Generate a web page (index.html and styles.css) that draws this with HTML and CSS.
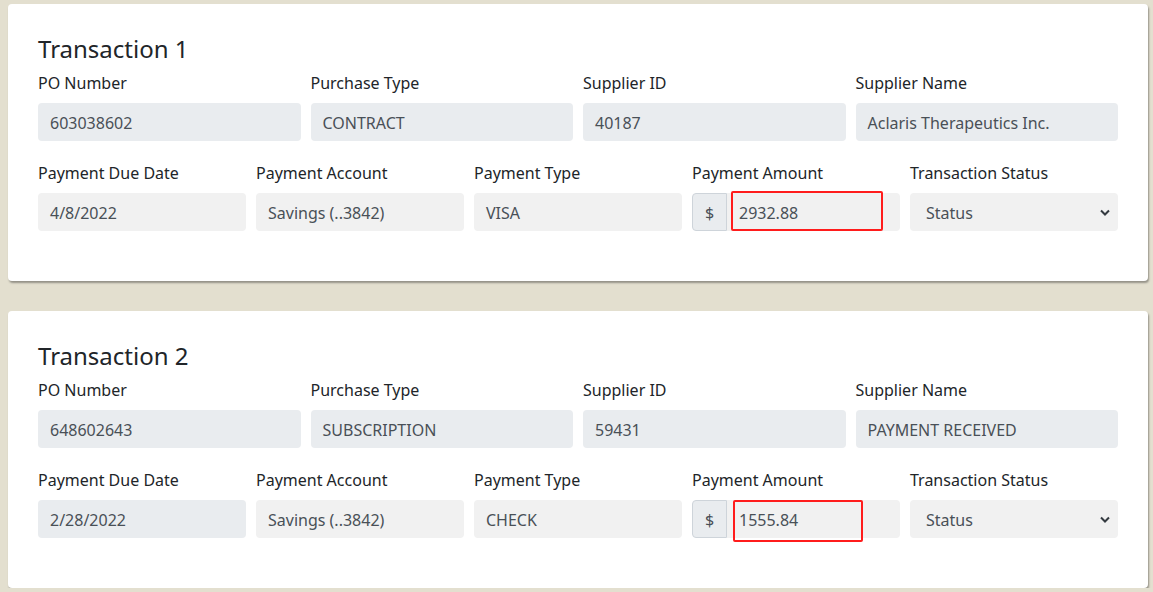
FILE: index.html
```html
<!DOCTYPE html>
<html>
<head>
<meta charset="utf-8">
<link rel="stylesheet" href="styles.css">
</head>
<body>
<main class="list">
  <section class="card">
    <h4 class="title">Transaction 1</h4>
    <div class="row row-4">
      <div class="field"><label>PO Number</label><div class="box box-dark">603038602</div></div>
      <div class="field"><label>Purchase Type</label><div class="box box-dark">CONTRACT</div></div>
      <div class="field"><label>Supplier ID</label><div class="box box-dark">40187</div></div>
      <div class="field"><label>Supplier Name</label><div class="box box-dark">Aclaris Therapeutics Inc.</div></div>
    </div>
    <div class="row row-5">
      <div class="field"><label>Payment Due Date</label><div class="box box-light">4/8/2022</div></div>
      <div class="field"><label>Payment Account</label><div class="box box-light">Savings (..3842)</div></div>
      <div class="field"><label>Payment Type</label><div class="box box-light">VISA</div></div>
      <div class="field"><label>Payment Amount</label>
        <div class="group">
          <span class="addon">$</span>
          <div class="box box-light grow">2932.88</div>
          <span class="mark mark-1"></span>
        </div>
      </div>
      <div class="field"><label>Transaction Status</label>
        <div class="box box-light select">Status<svg class="chev" width="10" height="7" viewBox="0 0 10 7"><path d="M1 1.5 L5 5.5 L9 1.5" fill="none" stroke="#343a40" stroke-width="2"/></svg></div>
      </div>
    </div>
  </section>
  <section class="card">
    <h4 class="title">Transaction 2</h4>
    <div class="row row-4">
      <div class="field"><label>PO Number</label><div class="box box-dark">648602643</div></div>
      <div class="field"><label>Purchase Type</label><div class="box box-dark">SUBSCRIPTION</div></div>
      <div class="field"><label>Supplier ID</label><div class="box box-dark">59431</div></div>
      <div class="field"><label>Supplier Name</label><div class="box box-dark">PAYMENT RECEIVED</div></div>
    </div>
    <div class="row row-5">
      <div class="field"><label>Payment Due Date</label><div class="box box-dark">2/28/2022</div></div>
      <div class="field"><label>Payment Account</label><div class="box box-light">Savings (..3842)</div></div>
      <div class="field"><label>Payment Type</label><div class="box box-light">CHECK</div></div>
      <div class="field"><label>Payment Amount</label>
        <div class="group">
          <span class="addon">$</span>
          <div class="box box-light grow">1555.84</div>
          <span class="mark mark-2"></span>
        </div>
      </div>
      <div class="field"><label>Transaction Status</label>
        <div class="box box-light select">Status<svg class="chev" width="10" height="7" viewBox="0 0 10 7"><path d="M1 1.5 L5 5.5 L9 1.5" fill="none" stroke="#343a40" stroke-width="2"/></svg></div>
      </div>
    </div>
  </section>
</main>
</body>
</html>
```

FILE: styles.css
```css
html, body {
  margin: 0;
  padding: 0;
}
body {
  background: #e3dfcf;
  font-family: "Noto Sans", "Open Sans", sans-serif;
  font-size: 16px;
  color: #212529;
}
.list {
  display: flex;
  flex-direction: column;
  gap: 30px;
  padding: 4px 5px 0 8px;
}
.card {
  background: #fff;
  border-radius: 4px;
  box-shadow: 1px 2px 2px rgba(0,0,0,0.35);
  padding: 30px 30px 50px 30px;
}
.title {
  margin: 0 0 8px 0;
  font-size: 24px;
  font-weight: 400;
  line-height: 29px;
  color: #212529;
}
.row {
  display: grid;
  column-gap: 10px;
}
.row-4 {
  grid-template-columns: repeat(4, 1fr);
  margin-bottom: 20px;
}
.row-5 {
  grid-template-columns: repeat(5, 1fr);
}
.field label {
  display: block;
  line-height: 24px;
  margin-bottom: 8px;
  color: #212529;
}
.box {
  height: 38px;
  box-sizing: border-box;
  border-radius: 4px;
  padding: 2px 12px 0 12px;
  display: flex;
  align-items: center;
  color: #495057;
  line-height: 24px;
}
.box-dark {
  background: #e9ecef;
}
.box-light {
  background: #f1f1f1;
}
.group {
  display: flex;
  position: relative;
}
.addon {
  width: 35px;
  height: 38px;
  box-sizing: border-box;
  border: 1px solid #ced4da;
  border-radius: 4px 0 0 4px;
  background: #e9ecef;
  display: flex;
  align-items: center;
  justify-content: center;
  color: #495057;
  padding-top: 2px;
}
.grow {
  flex: 1;
  border-radius: 0 4px 4px 0;
}
.select {
  padding-left: 16px;
  justify-content: space-between;
  padding-right: 8px;
}
.chev {
  margin-top: -2px;
}
.mark {
  position: absolute;
  border: 2px solid #ff1c1c;
  border-radius: 2px;
  box-sizing: border-box;
}
.mark-1 {
  left: 39px;
  top: -2px;
  width: 152px;
  height: 40px;
}
.mark-2 {
  left: 41px;
  top: 0;
  width: 130px;
  height: 42px;
}
```
